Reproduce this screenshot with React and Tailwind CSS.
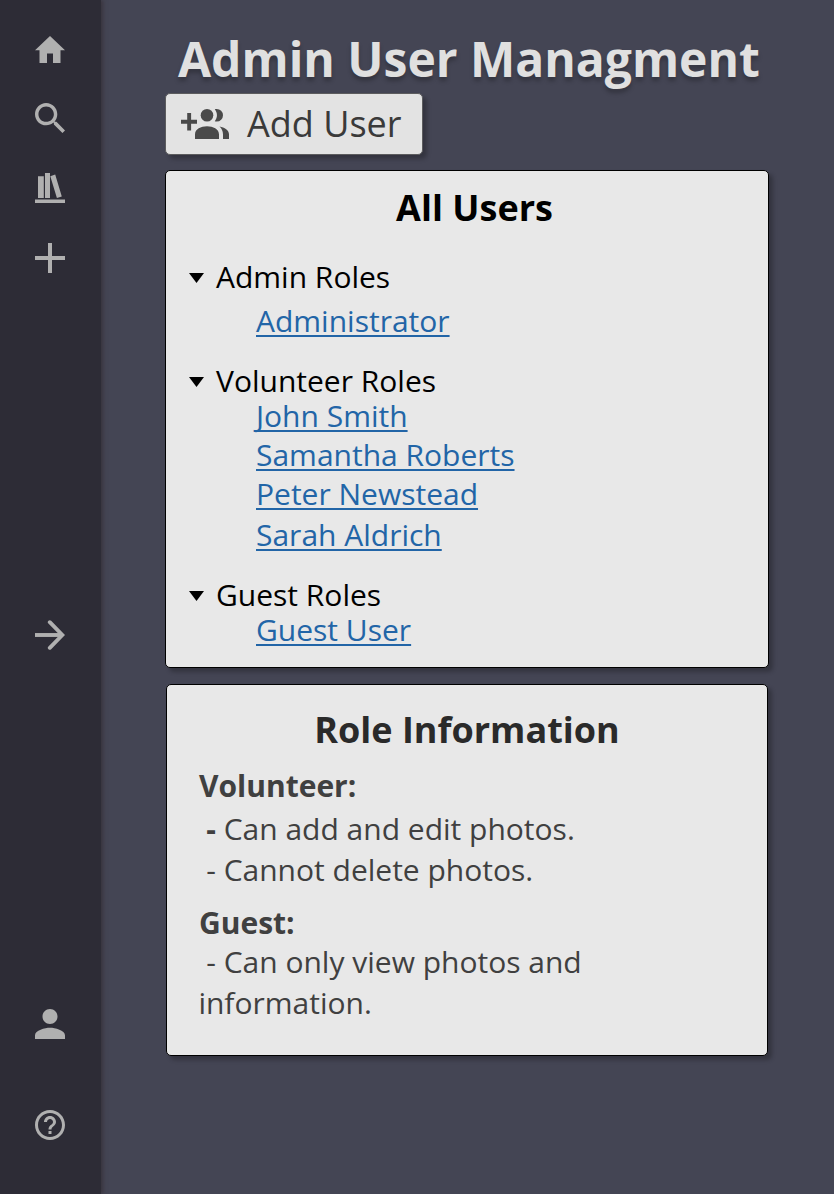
const iconColor = 'text-[#b0b0b0]';

function Icon({ box, className, children }) {
  return (
    <svg viewBox={box} preserveAspectRatio="none" fill="currentColor" className={`block shrink-0 ${className}`}>
      {children}
    </svg>
  );
}

function Sidebar() {
  return (
    <nav className={`z-10 flex w-[101px] shrink-0 flex-col items-center bg-[#2d2c36] pr-px shadow-[2px_0_4px_rgba(50,40,45,0.6)] ${iconColor}`}>
      <Icon box="2 3 20 17" className="mt-9 h-[27px] w-[30px]">
        <path d="M10 20v-6h4v6h5v-8h3L12 3 2 12h3v8z" />
      </Icon>
      <Icon box="3 3 17.49 17.49" className="mt-10 size-[30px]">
        <path d="M15.5 14h-.79l-.28-.27C15.41 12.59 16 11.11 16 9.5 16 5.91 13.09 3 9.5 3S3 5.91 3 9.5 5.91 16 9.5 16c1.61 0 3.09-.59 4.23-1.57l.27.28v.79l5 4.99L20.49 19l-4.99-5zm-6 0C7.01 14 5 11.99 5 9.5S7.01 5 9.5 5 14 7.01 14 9.5 11.99 14 9.5 14z" />
      </Icon>
      <Icon box="0 0 30 30" className="mt-10 size-[30px]">
        <path d="M3 3.300h5.800V25H3zM10 0h5v25h-5zM15.300 3.200l4.900-1.600 6.600 21.800-4.900 1.600zM0 26.600h30V30H0z" />
      </Icon>
      <Icon box="0 0 30 30" className="mt-10 size-[30px]">
        <path d="M13 0h4v13h13v4H17v13h-4V17H0v-4h13z" />
      </Icon>
      <Icon box="0 0 30 30" className="mt-[347px] size-[30px]">
        <path d="M0 15h27" fill="none" stroke="currentColor" strokeWidth="3.900" />
        <path d="M14.800 2.200l12.500 12.800-12.500 12.800" fill="none" stroke="currentColor" strokeWidth="3.900" strokeLinecap="round" />
      </Icon>
      <Icon box="4 4 16 16" className="mt-[359px] size-[30px]">
        <path d="M12 12c2.21 0 4-1.79 4-4s-1.79-4-4-4-4 1.79-4 4 1.79 4 4 4zm0 2c-2.67 0-8 1.34-8 4v2h16v-2c0-2.66-5.33-4-8-4z" />
      </Icon>
      <Icon box="2 2 20 20" className="mt-[71px] size-[30px]">
        <path d="M11 18h2v-2h-2v2zm1-16C6.48 2 2 6.48 2 12s4.48 10 10 10 10-4.48 10-10S17.52 2 12 2zm0 18c-4.41 0-8-3.59-8-8s3.59-8 8-8 8 3.59 8 8-3.59 8-8 8zm0-14c-2.21 0-4 1.79-4 4h2c0-1.1.9-2 2-2s2 .9 2 2c0 2-3 1.75-3 5h2c0-2.25 3-2.5 3-5 0-2.21-1.79-4-4-4z" />
      </Icon>
    </nav>
  );
}

function RoleHeading({ children, className }) {
  return (
    <div className={`flex h-[30px] items-center whitespace-pre leading-[30px] text-black ${className ?? ''}`}>
      <svg viewBox="0 0 15 10" className="mt-0.5 mr-3 ml-[23px] h-2.5 w-[15px]">
        <path d="M0 0h15L7.5 10z" />
      </svg>
      {children}
    </div>
  );
}

function UserLink({ children, className }) {
  return (
    <div className={`h-[30px] pl-[90px] leading-[30px] ${className}`}>
      <a href="#" className="text-[#2265a7] underline decoration-[1.5px] underline-offset-[3px] [text-decoration-skip-ink:none]">{children}</a>
    </div>
  );
}

export default function App() {
  return (
    <div className="flex h-[1194px] w-[834px] overflow-hidden bg-[#444554] font-['Open_Sans',sans-serif] text-[30px]">
      <Sidebar />
      <main className="flex flex-1 flex-col items-start pl-16">
        <h1 className="mt-7 ml-[13px] h-[60px] text-[48px] leading-[62px] font-bold whitespace-nowrap text-[#e0e0e0] [text-shadow:0_4px_4px_rgba(0,0,0,0.25)]">
          Admin User Managment
        </h1>
        <button className="mt-[5px] flex h-[62px] w-[258px] items-center rounded-[5px] border border-[#5c5c5e] bg-[#e3e3e3] pl-[15px] text-[36px] text-[#3a3a3a] shadow-[4px_4px_4px_rgba(0,0,0,0.25)]">
          <Icon box="0 0 48 30" className="h-[30px] w-12 text-[#4a4a4a]">
            <path d="M6.200 4h3.900v6.800H16v4h-5.900v6.700H6.200v-6.700H0v-4h6.200z" />
            <circle cx="26" cy="6.300" r="6.300" />
            <path d="M14 30v-4.500C14 20 20 17.300 26 17.300S38 20 38 25.500V30zM35.700 0a6.300 6.300 0 0 1 0 12.600c-.7 0-1.300-.1-1.900-.3 2.900-3.600 2.900-8.400 0-12 .6-.2 1.200-.3 1.900-.3zM38.500 17.500c5 .8 9.500 3.600 9.500 8V30h-6v-4.500c0-3.400-1.400-6-3.500-8z" />
          </Icon>
          <span className="ml-[18px] leading-[60px] whitespace-nowrap">Add User</span>
        </button>
        <section className="mt-[15px] h-[498px] w-[604px] rounded-[5px] border border-black bg-[#e8e8e8] shadow-[4px_4px_4px_rgba(0,0,0,0.25)]">
          <h2 className="mt-[17px] mb-[34px] h-10 pl-[15px] text-center text-[36px] leading-10 font-bold text-black">All Users</h2>
          <RoleHeading>Admin Roles</RoleHeading>
          <UserLink className="mt-3.5">Administrator</UserLink>
          <RoleHeading className="mt-[30px]">Volunteer Roles</RoleHeading>
          <UserLink className="mt-[5px]">John Smith</UserLink>
          <UserLink className="mt-[9px]">Samantha Roberts</UserLink>
          <UserLink className="mt-[9px]">Peter Newstead</UserLink>
          <UserLink className="mt-[11px]">Sarah Aldrich</UserLink>
          <RoleHeading className="mt-[30px]">Guest Roles</RoleHeading>
          <UserLink className="mt-[5px]">Guest User</UserLink>
        </section>
        <section className="mt-4 ml-px h-[372px] w-[602px] rounded-[5px] border border-black bg-[#e8e8e8] pl-[31.4px] leading-[30px] text-[#404040] shadow-[4px_4px_4px_rgba(0,0,0,0.25)]">
          <h2 className="mt-[25px] mr-[31.4px] h-10 text-center text-[36px] leading-10 font-bold text-[#2a2a2a]">Role Information</h2>
          <h3 className="mt-[21px] ml-[0.6px] font-bold">Volunteer:</h3>
          <p className="mt-[13px] whitespace-pre"><b> -</b> Can add and edit photos.</p>
          <p className="mt-[11px] whitespace-pre"> - Cannot delete photos.</p>
          <h3 className="mt-[23px] ml-[0.6px] font-bold">Guest:</h3>
          <p className="mt-[3px] leading-[41px] whitespace-pre"> - Can only view photos and{'\n'}information.</p>
        </section>
      </main>
    </div>
  );
}
